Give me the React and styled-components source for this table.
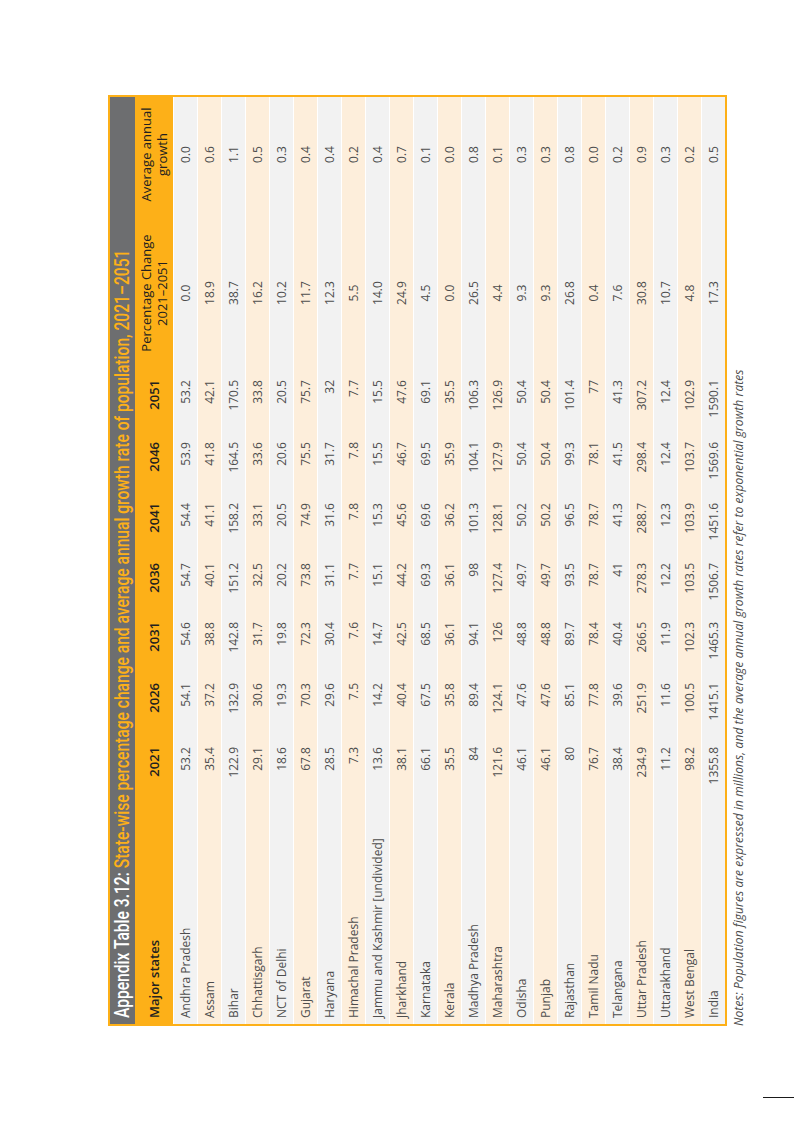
import React from 'react'
import styled, { createGlobalStyle } from 'styled-components'

const ORANGE = '#fdb018'
const SHEET_W = 931
const SHEET_H = 655

const GlobalStyle = createGlobalStyle`
    body {
        margin: 0;
        background: #ffffff;
    }
`

const StyledPage = styled.div`
    width: 794px;
    height: 1123px;
    box-sizing: border-box;
    padding: 95px 0 0 108px;
    display: flex;
    flex-direction: column;
    overflow: hidden;
`
// the printed table is turned a quarter turn, this box holds its turned size
const StyledFrame = styled.div`
    width: ${SHEET_H}px;
    height: ${SHEET_W}px;
`
const StyledSheet = styled.div`
    width: ${SHEET_W}px;
    height: ${SHEET_H}px;
    transform-origin: top left;
    transform: rotate(-90deg) translateX(-100%);
    font-family: "Open Sans", "Noto Sans", sans-serif;
`
const StyledTable = styled.div`
    border: 2px solid ${ORANGE};
    display: flex;
    flex-direction: column;
    gap: 1px;
    background: #ffffff;
`
const StyledTitleBar = styled.div`
    height: 25px;
    background: #6d6e70;
    display: flex;
    align-items: center;
    padding-left: 6px;
    margin-bottom: -1px;
    overflow: hidden;
    white-space: nowrap;
`
const StyledTitleText = styled.span`
    display: inline-block;
    font-family: Roboto, "Liberation Sans", sans-serif;
    font-weight: 500;
    font-size: 20px;
    line-height: 25px;
    color: ${ORANGE};
    transform: scaleX(0.78);
    transform-origin: left center;
`
const StyledTitleLead = styled.span`
    color: #ffffff;
`
const StyledRow = styled.div`
    display: grid;
    grid-template-columns: 227px 56px 64px 61px 59px 60px 61px 62px 154px 123px;
    height: ${({ $head }) => ($head ? '38px' : '23px')};
    background: ${({ $head, $shade }) => ($head ? ORANGE : $shade ? '#fdeedb' : '#f2f2f2')};
    color: ${({ $head }) => ($head ? '#231f20' : '#4d4d4d')};
    font-size: ${({ $head }) => ($head ? '13px' : '12px')};
    font-weight: ${({ $head }) => ($head ? 600 : 400)};
    line-height: ${({ $head }) => ($head ? '16px' : '13px')};
`
const StyledCell = styled.div`
    display: flex;
    align-items: center;
    justify-content: ${({ $align }) => ($align === 'left' ? 'flex-start' : $align === 'center' ? 'center' : 'flex-end')};
    text-align: ${({ $align }) => ($align === 'left' ? 'left' : $align === 'center' ? 'center' : 'right')};
    padding: ${({ $align }) => ($align === 'left' ? '0 0 0 6px' : $align === 'center' ? '0 0 0 8px' : '0 6px 0 0')};
    font-weight: ${({ $light }) => ($light ? 400 : 'inherit')};
    white-space: nowrap;
`
const StyledNotes = styled.p`
    margin: 4px 0 0 0;
    font-style: italic;
    font-weight: 400;
    font-size: 12px;
    letter-spacing: 0.08px;
    line-height: 15px;
    color: #4d4d4d;
    white-space: nowrap;
`
const StyledPageRule = styled.div`
    align-self: flex-end;
    width: 31px;
    margin-top: 71px;
    border-top: 1px solid #1a1a1a;
`

const headings = ['2021', '2026', '2031', '2036', '2041', '2046', '2051']

const states = [
    ['Andhra Pradesh', '53.2', '54.1', '54.6', '54.7', '54.4', '53.9', '53.2', '0.0', '0.0'],
    ['Assam', '35.4', '37.2', '38.8', '40.1', '41.1', '41.8', '42.1', '18.9', '0.6'],
    ['Bihar', '122.9', '132.9', '142.8', '151.2', '158.2', '164.5', '170.5', '38.7', '1.1'],
    ['Chhattisgarh', '29.1', '30.6', '31.7', '32.5', '33.1', '33.6', '33.8', '16.2', '0.5'],
    ['NCT of Delhi', '18.6', '19.3', '19.8', '20.2', '20.5', '20.6', '20.5', '10.2', '0.3'],
    ['Gujarat', '67.8', '70.3', '72.3', '73.8', '74.9', '75.5', '75.7', '11.7', '0.4'],
    ['Haryana', '28.5', '29.6', '30.4', '31.1', '31.6', '31.7', '32', '12.3', '0.4'],
    ['Himachal Pradesh', '7.3', '7.5', '7.6', '7.7', '7.8', '7.8', '7.7', '5.5', '0.2'],
    ['Jammu and Kashmir [undivided]', '13.6', '14.2', '14.7', '15.1', '15.3', '15.5', '15.5', '14.0', '0.4'],
    ['Jharkhand', '38.1', '40.4', '42.5', '44.2', '45.6', '46.7', '47.6', '24.9', '0.7'],
    ['Karnataka', '66.1', '67.5', '68.5', '69.3', '69.6', '69.5', '69.1', '4.5', '0.1'],
    ['Kerala', '35.5', '35.8', '36.1', '36.1', '36.2', '35.9', '35.5', '0.0', '0.0'],
    ['Madhya Pradesh', '84', '89.4', '94.1', '98', '101.3', '104.1', '106.3', '26.5', '0.8'],
    ['Maharashtra', '121.6', '124.1', '126', '127.4', '128.1', '127.9', '126.9', '4.4', '0.1'],
    ['Odisha', '46.1', '47.6', '48.8', '49.7', '50.2', '50.4', '50.4', '9.3', '0.3'],
    ['Punjab', '46.1', '47.6', '48.8', '49.7', '50.2', '50.4', '50.4', '9.3', '0.3'],
    ['Rajasthan', '80', '85.1', '89.7', '93.5', '96.5', '99.3', '101.4', '26.8', '0.8'],
    ['Tamil Nadu', '76.7', '77.8', '78.4', '78.7', '78.7', '78.1', '77', '0.4', '0.0'],
    ['Telangana', '38.4', '39.6', '40.4', '41', '41.3', '41.5', '41.3', '7.6', '0.2'],
    ['Uttar Pradesh', '234.9', '251.9', '266.5', '278.3', '288.7', '298.4', '307.2', '30.8', '0.9'],
    ['Uttarakhand', '11.2', '11.6', '11.9', '12.2', '12.3', '12.4', '12.4', '10.7', '0.3'],
    ['West Bengal', '98.2', '100.5', '102.3', '103.5', '103.9', '103.7', '102.9', '4.8', '0.2'],
    ['India', '1355.8', '1415.1', '1465.3', '1506.7', '1451.6', '1569.6', '1590.1', '17.3', '0.5'],
]

const cellAlign = (index) => {
    if (index === 0) return 'left'
    if (index > 7) return 'center'
    return 'right'
}

const App = () => {
    return (
        <StyledPage>
            <GlobalStyle />
            <StyledFrame>
                <StyledSheet>
                    <StyledTable>
                        <StyledTitleBar>
                            <StyledTitleText>
                                <StyledTitleLead>Appendix Table 3.12: </StyledTitleLead>
                                State-wise percentage change and average annual growth rate of population, 2021–2051
                            </StyledTitleText>
                        </StyledTitleBar>
                        <StyledRow $head>
                            <StyledCell $align="left">Major states</StyledCell>
                            {headings.map(year => (
                                <StyledCell key={year} $align="right">{year}</StyledCell>
                            ))}
                            <StyledCell $align="center" $light>Percentage Change<br />2021–2051</StyledCell>
                            <StyledCell $align="center" $light>Average annual<br />growth</StyledCell>
                        </StyledRow>
                        {states.map((row, i) => (
                            <StyledRow key={row[0]} $shade={i % 2 === 1}>
                                {row.map((value, j) => (
                                    <StyledCell key={j} $align={cellAlign(j)}>{value}</StyledCell>
                                ))}
                            </StyledRow>
                        ))}
                    </StyledTable>
                    <StyledNotes>
                        Notes: Population figures are expressed in millions, and the average annual growth rates refer to exponential growth rates
                    </StyledNotes>
                </StyledSheet>
            </StyledFrame>
            <StyledPageRule />
        </StyledPage>
    )
}

export default App
